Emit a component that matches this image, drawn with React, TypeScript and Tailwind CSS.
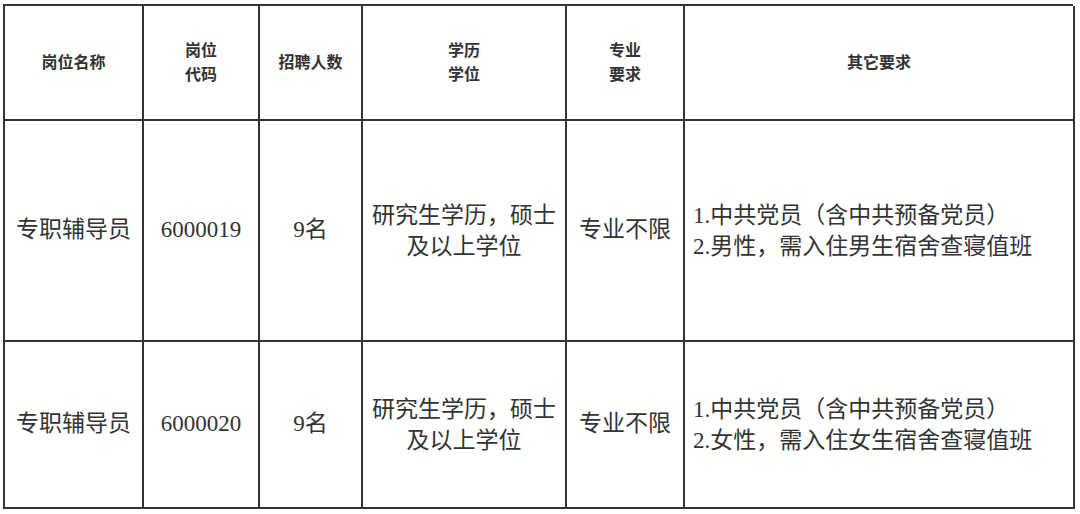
import React from "react";

const font = { fontFamily: '"Liberation Serif", "Noto Sans CJK SC", serif' };

function Cell({
  children,
  className = "",
}: {
  children: React.ReactNode;
  className?: string;
}) {
  return (
    <div
      className={
        "border-r-2 border-b-2 border-[#333] flex items-center " + className
      }
    >
      {children}
    </div>
  );
}

const rows = [
  { code: "6000019", gender: "2.男性，需入住男生宿舍查寝值班" },
  { code: "6000020", gender: "2.女性，需入住女生宿舍查寝值班" },
];

export default function App() {
  return (
    <div className="w-[1080px] h-[514px] bg-white pt-[4px] pl-[3px]" style={font}>
      <div className="w-[1070px] grid grid-cols-[139px_116px_103px_204px_118px_390px] grid-rows-[115px_221px_167px] border-l-2 border-t-2 border-[#333] text-[#333]">
        <Cell className="justify-center text-[16px] font-bold leading-6">岗位名称</Cell>
        <Cell className="justify-center text-center text-[16px] font-bold leading-6">
          岗位<br />代码
        </Cell>
        <Cell className="justify-center text-[16px] font-bold leading-6">招聘人数</Cell>
        <Cell className="justify-center text-center text-[16px] font-bold leading-6">
          学历<br />学位
        </Cell>
        <Cell className="justify-center text-center text-[16px] font-bold leading-6">
          专业<br />要求
        </Cell>
        <Cell className="justify-center text-[16px] font-bold leading-6">其它要求</Cell>

        {rows.map((r) => (
          <React.Fragment key={r.code}>
            <Cell className="justify-center text-[23px]">专职辅导员</Cell>
            <Cell className="justify-center text-[23px]">{r.code}</Cell>
            <Cell className="justify-center text-[23px]">9名</Cell>
            <Cell className="justify-center text-center text-[23px] leading-[31px]">
              研究生学历，硕士<br />及以上学位
            </Cell>
            <Cell className="justify-center text-[23px]">专业不限</Cell>
            <Cell className="justify-start pl-[8px] text-[23px] leading-[31px]">
              <div>
                1.中共党员（含中共预备党员）<br />
                {r.gender}
              </div>
            </Cell>
          </React.Fragment>
        ))}
      </div>
    </div>
  );
}
